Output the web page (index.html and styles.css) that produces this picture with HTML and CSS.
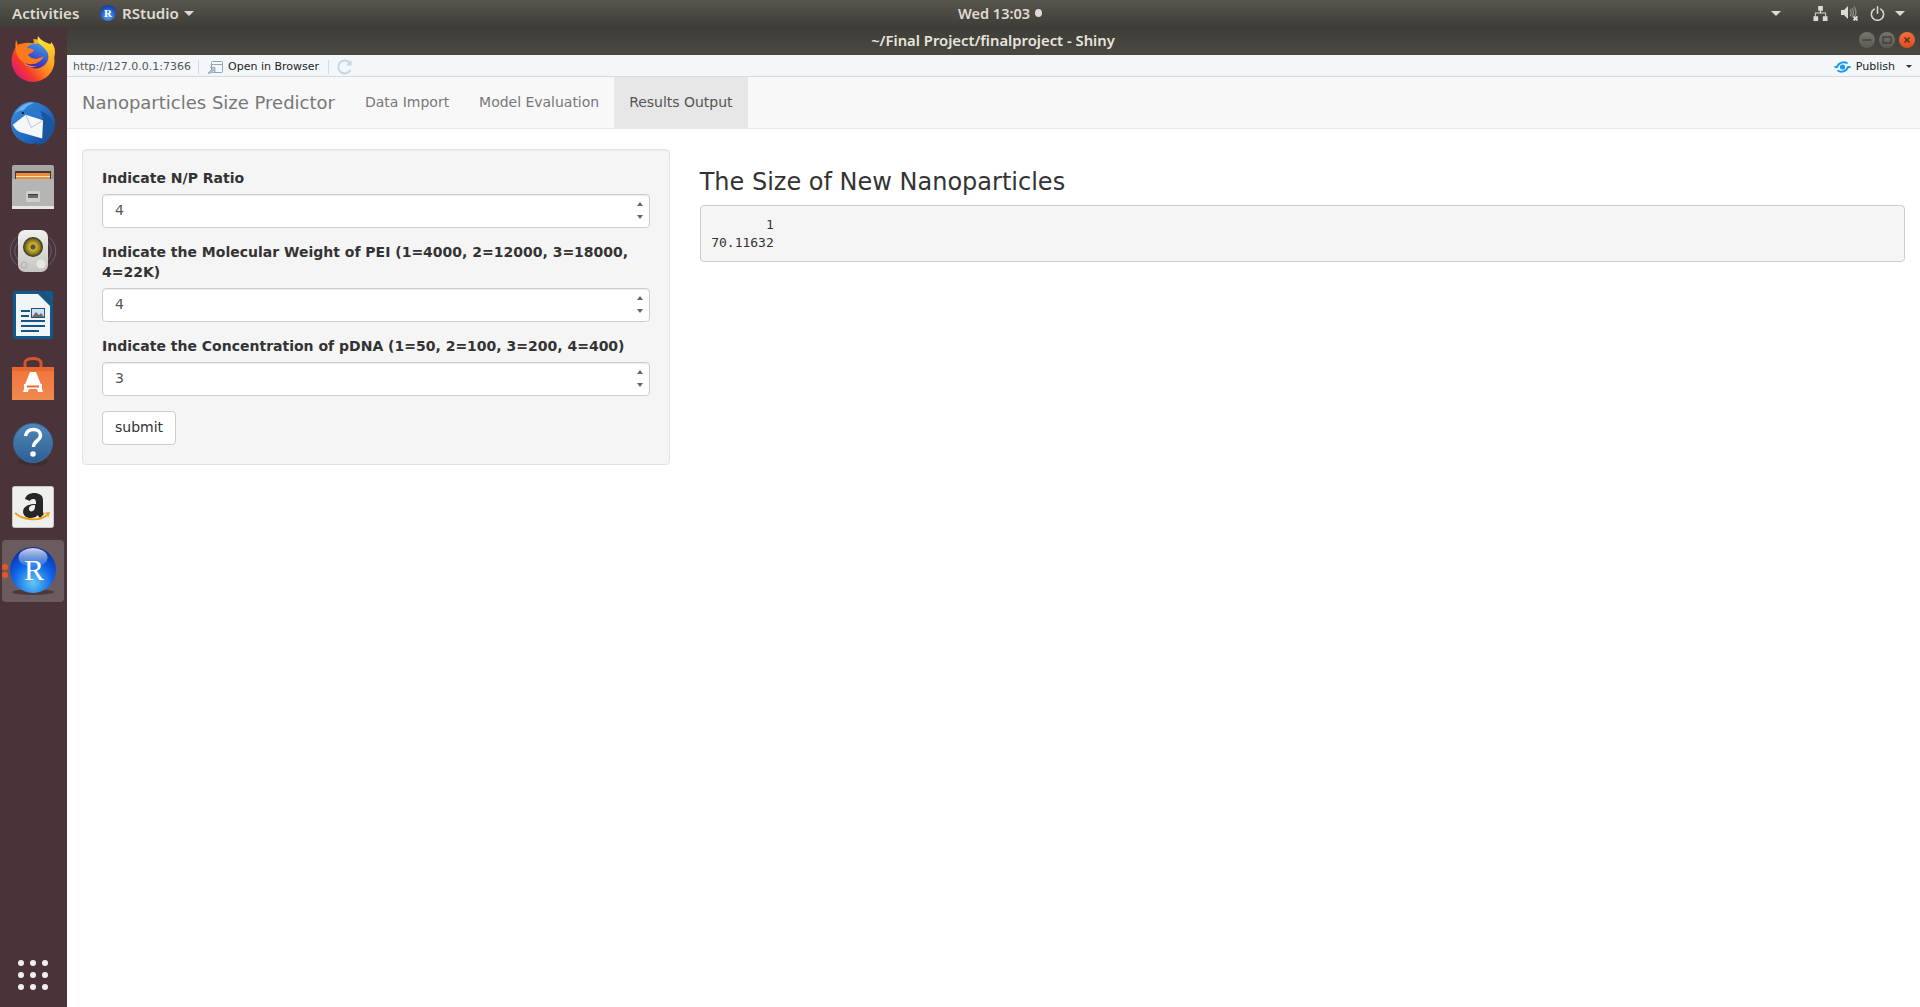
FILE: index.html
```
<!DOCTYPE html>
<html lang="en">
<head>
<meta charset="utf-8">
<title>Nanoparticles Size Predictor</title>
<link rel="stylesheet" href="styles.css">
</head>
<body>
<header class="topbar">
  <div class="top-left">
    <span class="activities">Activities</span>
    <svg class="app-r" viewBox="0 0 16 16"><defs><radialGradient id="tr" cx=".5" cy=".7" r=".6"><stop offset="0" stop-color="#5aa8f0"/><stop offset="1" stop-color="#1443b4"/></radialGradient></defs><circle cx="8" cy="8" r="8" fill="url(#tr)"/><text x="8" y="12" class="app-r-letter">R</text></svg>
    <span class="app-name">RStudio</span>
    <span class="caret-top"></span>
  </div>
  <div class="top-clock"><span>Wed 13:03</span><span class="clock-dot"></span></div>
  <div class="top-right">
    <span class="caret-top caret-a"></span>
    <svg class="tray-net" viewBox="0 0 16 16"><path fill="#dcdad4" d="M5.500 0h5v5H8.600v2H14v4h1.500v5h-5v-5H13V8H3v3h2.500v5h-5v-5H2V7h5.400V5H5.500z"/></svg>
    <svg class="tray-vol" viewBox="0 0 18 16"><path fill="#dcdad4" d="M0 5h3l4-4v13l-4-4H0z"/><path fill="none" stroke="#8f8c85" stroke-width="1.300" d="M9 4.500c1.500 2 1.500 4.500 0 6.500M11 3c2 3 2 6 0 9M13 1.500c2.400 3.500 2.400 7 .8 10"/><path stroke="#dcdad4" stroke-width="1.800" d="M12.500 11.500l4 4M16.500 11.500l-4 4"/></svg>
    <svg class="tray-pow" viewBox="0 0 16 16"><path fill="none" stroke="#dcdad4" stroke-width="1.600" stroke-linecap="round" d="M4.500 3.300a6.500 6.500 0 1 0 7 0M8 .8v7"/></svg>
    <span class="caret-top"></span>
  </div>
</header>
<div class="desktop">
  <nav class="dock">
    <div class="dock-item">
      <svg class="ico-ff" viewBox="0 0 44 46"><defs><linearGradient id="ff" x1=".95" y1=".15" x2=".1" y2=".85"><stop offset="0" stop-color="#ffc928"/><stop offset=".45" stop-color="#ff8a1e"/><stop offset=".75" stop-color="#f5372e"/><stop offset="1" stop-color="#e0187a"/></linearGradient><linearGradient id="ffb" x1=".7" y1="0" x2=".3" y2="1"><stop offset="0" stop-color="#3f9ae8"/><stop offset=".6" stop-color="#3a4cc4"/><stop offset="1" stop-color="#47209c"/></linearGradient><linearGradient id="fft" x1=".4" y1="0" x2=".6" y2="1"><stop offset="0" stop-color="#ffe93a"/><stop offset="1" stop-color="#ffa51e"/></linearGradient></defs><circle cx="22" cy="24.500" r="21.500" fill="url(#ff)"/><path fill="#4a3439" d="M5 2h17l1 5c-5 0-9 1-12 3z"/><circle cx="25" cy="20" r="12.500" fill="url(#ffb)"/><path fill="#ff7a1c" d="M5 4c1 2 2 4 2 6 3-3 8-4 13-3-3 1-5 3-4 5 3 0 6 1 7 2-1 3-5 3-6 5 3 4 8 5 14 2l2-1c-3 6-9 9-15 8C10 27 2 18 5 4z"/><path fill="#ff8f25" d="M12 26c3 3 9 5 14 4-3 2-10 2-14-4z"/><path fill="url(#fft)" d="M27 0c-1 4 0 7 4 10 6 5 9 11 6 19 4-3 7-7 7-13 0-5-2-8-4-10 0 1 0 2-1 2-3-1-9-3-12-8z"/></svg>
    </div>
    <div class="dock-item">
      <svg class="ico-48" viewBox="0 0 48 48"><defs><linearGradient id="tb" x1="0" y1="0" x2="1" y2="1"><stop offset="0" stop-color="#3d8ede"/><stop offset=".6" stop-color="#1f68bd"/><stop offset="1" stop-color="#123f92"/></linearGradient></defs><path fill="url(#tb)" d="M24 1c13 1 24 11 24 23 0 12-8 21-17 24l-4-2-5 1C9 45 0 36 0 25 0 12 11 0 24 1z"/><path fill="#1a559f" d="M33 11c7 3 13 9 14 17-1 8-7 16-13 19 1-3 0-5-1-8l-2 1c2-10 3-21 2-29z"/><path fill="#6fb2ee" d="M4 14C9 6 18 0 25 2c-5 2-9 4-11 8-4 0-7 1-10 4z"/><path fill="#2c77cf" d="M14 10c6-3 13-1 18 2l3 8-17-7z"/><path fill="#f5f6f8" d="M2 26l14-11 19 6-1 20-21-6C8 34 4 31 2 26z"/><path fill="none" stroke="#a8b4c4" stroke-width=".8" d="M16 15l6 14 13-8"/><circle cx="13" cy="13" r="1.300" fill="#1a2434"/></svg>
    </div>
    <div class="dock-item">
      <svg class="ico-42t" viewBox="0 0 42 44"><defs><linearGradient id="fc" x1="0" y1="0" x2="0" y2="1"><stop offset="0" stop-color="#a8a8a4"/><stop offset="1" stop-color="#8c8c88"/></linearGradient></defs><rect y="0" width="42" height="44" rx="2" fill="url(#fc)"/><rect x="3" y="6" width="36" height="9" fill="#3d3a36"/><rect x="4" y="8" width="34" height="8" fill="#ee8a3c"/><rect x="4" y="11" width="34" height="1" fill="#f8e6c8"/><rect x="0" y="14" width="42" height="28" fill="#b5b5b1"/><rect y="41" width="42" height="3" fill="#e6e6e2"/><rect x="14" y="26" width="14" height="11" rx="1.500" fill="#cfcfcb"/><rect x="16" y="29" width="10" height="4" fill="#6a6a66"/><rect x="16" y="29" width="10" height="1" fill="#3a3a36"/></svg>
    </div>
    <div class="dock-item">
      <svg class="ico-48" viewBox="0 0 48 44"><defs><linearGradient id="rb" x1="0" y1="0" x2="0" y2="1"><stop offset="0" stop-color="#f0f0ee"/><stop offset="1" stop-color="#c4c4c0"/></linearGradient><radialGradient id="rc" cx=".5" cy=".5" r=".5"><stop offset="0" stop-color="#3a3a30"/><stop offset=".3" stop-color="#d8b828"/><stop offset=".7" stop-color="#8c7c20"/><stop offset="1" stop-color="#2c2c28"/></radialGradient></defs><g fill="none" stroke="#6d7f98" stroke-opacity=".6"><path d="M8 8C-1 16-1 28 8 36"/><path d="M11 11C4 18 4 26 11 33"/><path d="M40 8c9 8 9 20 0 28"/><path d="M37 11c7 7 7 15 0 22"/></g><rect x="9" y="1" width="30" height="42" rx="7" fill="url(#rb)"/><circle cx="24" cy="18" r="10" fill="url(#rc)"/><circle cx="24" cy="18" r="2.500" fill="#55534a"/><circle cx="32" cy="35" r="4.500" fill="#e6e6e2"/><circle cx="15" cy="36" r="3" fill="none" stroke="#b0b0ac"/></svg>
    </div>
    <div class="dock-item">
      <svg class="ico-doc" viewBox="0 0 40 48"><path fill="#0e5a8c" d="M2 0h25l13 13v32a3 3 0 0 1-3 3H3a3 3 0 0 1-3-3V2a2 2 0 0 1 2-2z"/><path fill="#f2f5f6" d="M3 3h22l12 12v30H3z"/><path fill="#0e5a8c" d="M28 0h10a2 2 0 0 1 2 2v10z"/><rect x="8" y="19" width="9" height="2" fill="#15568a"/><rect x="8" y="24" width="8" height="2" fill="#15568a"/><rect x="8" y="29" width="24" height="2" fill="#15568a"/><rect x="8" y="34" width="24" height="2" fill="#15568a"/><rect x="8" y="39" width="18" height="2" fill="#15568a"/><rect x="18" y="17" width="14" height="10" fill="#15568a"/><path fill="#cfe0ee" d="M19 18h12v8H19z"/><path fill="#7a6a5a" d="M19 26l4-5 3 3 2-2 3 4z"/></svg>
    </div>
    <div class="dock-item">
      <svg class="ico-42t" viewBox="0 0 42 44"><defs><linearGradient id="sw" x1="0" y1="0" x2="0" y2="1"><stop offset="0" stop-color="#f2743a"/><stop offset="1" stop-color="#ef8a50"/></linearGradient></defs><path fill="none" stroke="#d6552a" stroke-width="3" d="M13 14V6c0-6 16-6 16 0v8"/><path fill="url(#sw)" d="M0 10h42v33H0z"/><path fill="#e66a30" d="M0 10h42v4H0z"/><path fill="#fff" d="M18 15h6l6 15h-5l-1-3h-6l-1 3h-5z"/><rect x="12" y="27" width="18" height="5" fill="#fff"/><rect x="15" y="28.500" width="12" height="2" fill="#ee6a30"/><path fill="#fff" d="M12 32h5l-1 3h-5zM25 32h5l1 3h-5z"/></svg>
    </div>
    <div class="dock-item">
      <svg class="ico-help" viewBox="0 -4 40 48"><defs><linearGradient id="hp" x1="0" y1="0" x2="0" y2="1"><stop offset="0" stop-color="#4f88bc"/><stop offset="1" stop-color="#2f5f94"/></linearGradient></defs><ellipse cx="20" cy="38" rx="15" ry="5" fill="#3e2e33"/><circle cx="20" cy="20" r="19.500" fill="url(#hp)" stroke="#3a6c9e"/><path fill="none" stroke="#fff" stroke-width="3.500" d="M12.500 13c1-5 5-6.500 8-6.500 4 0 7 2.500 7 6 0 5-7 5.500-7 11.500"/><circle cx="20" cy="31" r="2.800" fill="#fff"/></svg>
    </div>
    <div class="dock-item">
      <svg class="ico-42" viewBox="0 0 42 42"><rect x=".5" y=".5" width="41" height="41" rx="2" fill="#efefed" stroke="#c8c8c6"/><path fill="#262626" d="M13 13c1-4 5-6 9-6 5 0 9 2 9 7v11c0 2 .5 3 1 3l-4 4c-1-1-2-2-2-3-3 4-14 5-15-3 0-6 6-8 13-8 0-3 0-5-3-5-2 0-3 1-3 2zm10 6c-4 0-6 1-6 4 0 4 6 3 6-2z"/><path fill="none" stroke="#f39c12" stroke-width="1.800" d="M3 27c8 7 24 9 32 2"/><path fill="#f39c12" d="M31 27l7-1-2 6-1-4z"/></svg>
    </div>
    <div class="dock-item">
      <div class="tile">
        <svg class="ico-r" viewBox="0 0 46 48"><defs><radialGradient id="rg" cx=".5" cy=".78" r=".78"><stop offset="0" stop-color="#62c8f6"/><stop offset=".55" stop-color="#0d64e8"/><stop offset="1" stop-color="#0a2a9c"/></radialGradient><linearGradient id="rs" x1="0" y1="0" x2="0" y2="1"><stop offset="0" stop-color="#e6ecf4" stop-opacity=".9"/><stop offset="1" stop-color="#7ca4e8" stop-opacity=".3"/></linearGradient></defs><ellipse cx="23" cy="45" rx="21" ry="3" fill="#4a3a3e"/><circle cx="23" cy="23" r="23" fill="url(#rg)"/><ellipse cx="23" cy="10.500" rx="14.500" ry="9.500" fill="url(#rs)"/><text x="24" y="33" class="ico-r-letter">R</text></svg>
      </div>
      <span class="run-dot dot-a"></span><span class="run-dot dot-b"></span>
    </div>
    <div class="app-grid">
      <i></i><i></i><i></i><i></i><i></i><i></i><i></i><i></i><i></i>
    </div>
  </nav>
  <div class="window">
    <div class="titlebar">
      <span class="title-text">~/Final Project/finalproject - Shiny</span>
      <div class="win-btns">
        <span class="win-btn"><svg viewBox="0 0 16 16"><path d="M3.500 8h9" stroke="#3c3a36" stroke-width="1.200"/></svg></span>
        <span class="win-btn"><svg viewBox="0 0 16 16"><rect x="4" y="5" width="8" height="6" fill="none" stroke="#3c3a36" stroke-width="1.200"/></svg></span>
        <span class="win-btn win-close"><svg viewBox="0 0 16 16"><path d="M5.500 5.500l5 5M10.500 5.500l-5 5" stroke="#4a2a1a" stroke-width="1.200"/></svg></span>
      </div>
    </div>
    <div class="toolbar">
      <span class="tb-url">http://127.0.0.1:7366</span>
      <span class="tb-sep"></span>
      <svg class="tb-open" viewBox="0 0 16 14"><rect x="4.500" y="1.500" width="11" height="11" rx="1" fill="#f4f7f9" stroke="#93a4b4"/><path d="M4.500 4.500h11" stroke="#93a4b4"/><path fill="#b6c4d0" stroke="#7c8fa2" stroke-width=".6" d="M1 13l4-4-1.500-1.500H8V12L6.500 10.500l-4 3.500z"/></svg>
      <span class="tb-open-text">Open in Browser</span>
      <span class="tb-sep"></span>
      <svg class="tb-refresh" viewBox="0 0 16 16"><path fill="none" stroke="#c8d6e2" stroke-width="2" d="M13.500 11A6.500 6.500 0 1 1 13 4"/><path fill="#c8d6e2" d="M14.500 1v5.500H9z"/></svg>
      <svg class="tb-publish" viewBox="0 0 17 14"><path fill="none" stroke="#1b9ce8" stroke-width="2" d="M.5 7H3C4.500 2.500 10 1 13.500 3.500M16.500 7H14C12.500 11.500 7 13 3.500 10.500"/><circle cx="8.500" cy="7" r="2.600" fill="#1b9ce8"/></svg>
      <span class="tb-publish-text">Publish</span>
      <span class="tb-caret"></span>
    </div>
    <div class="navbar">
      <span class="brand">Nanoparticles Size Predictor</span>
      <a class="nav-link">Data Import</a>
      <a class="nav-link">Model Evaluation</a>
      <a class="nav-link nav-active">Results Output</a>
    </div>
    <main class="content">
      <section class="col-side">
        <form class="well">
          <div class="form-group">
            <label class="field-label">Indicate N/P Ratio</label>
            <div class="num-field"><input class="num-input" type="text" value="4"><span class="spin"><i class="spin-up"></i><i class="spin-down"></i></span></div>
          </div>
          <div class="form-group">
            <label class="field-label">Indicate the Molecular Weight of PEI (1=4000, 2=12000, 3=18000, 4=22K)</label>
            <div class="num-field"><input class="num-input" type="text" value="4"><span class="spin"><i class="spin-up"></i><i class="spin-down"></i></span></div>
          </div>
          <div class="form-group">
            <label class="field-label">Indicate the Concentration of pDNA (1=50, 2=100, 3=200, 4=400)</label>
            <div class="num-field"><input class="num-input" type="text" value="3"><span class="spin"><i class="spin-up"></i><i class="spin-down"></i></span></div>
          </div>
          <button class="btn" type="button">submit</button>
        </form>
      </section>
      <section class="col-main">
        <h3 class="result-title">The Size of New Nanoparticles</h3>
        <pre class="result">       1 
70.11632 </pre>
      </section>
    </main>
  </div>
</div>
</body>
</html>
```

FILE: styles.css
```
* { box-sizing: border-box; }
html, body { margin: 0; height: 1007px; overflow: hidden; }
body { font-family: "DejaVu Sans", sans-serif; font-size: 14px; line-height: 20px; color: #333; background: #fff; }

.topbar {
  height: 27px; display: flex; align-items: center;
  padding-bottom: 1px;
  background: linear-gradient(#58554d, #3f3d38);
  color: #dedbd2; font-family: "Noto Sans", sans-serif; font-weight: 600; font-size: 14.500px;
}
.top-left { width: 958px; display: flex; align-items: center; padding-left: 12px; font-size: 15.100px; }
.activities { width: 88px; }
.app-r { width: 16px; height: 16px; }
.app-r-letter { font: bold 11px "Liberation Serif", serif; fill: #fff; text-anchor: middle; }
.app-name { margin-left: 6px; width: 62px; }
.caret-top { width: 0; height: 0; border-left: 5.500px solid transparent; border-right: 5.500px solid transparent; border-top: 5.500px solid #dcdad4; }
.top-clock { display: flex; align-items: center; gap: 5px; white-space: nowrap; width: 84px; }
.clock-dot { width: 8px; height: 8px; border-radius: 50%; background: #dcdad4; }
.top-right { flex: 1; display: flex; align-items: center; padding-left: 729px; }
.caret-a { margin-right: 32px; }
.tray-net { width: 15px; height: 15px; margin-right: 13px; }
.tray-vol { width: 18px; height: 16px; margin-right: 11px; }
.tray-pow { width: 15px; height: 15px; margin-right: 10px; }

.desktop { display: flex; height: 980px; }
.dock { width: 67px; flex: none; display: flex; flex-direction: column; background: #4a3439; position: relative; }
.dock-item { height: 64px; flex: none; display: flex; align-items: center; justify-content: center; position: relative; padding-right: 1px; }
.ico-ff { width: 44px; height: 46px; }
.ico-48 { width: 48px; height: 44px; }
.ico-42 { width: 42px; height: 42px; }
.ico-42t { width: 42px; height: 44px; }
.ico-doc { width: 40px; height: 48px; }
.ico-help { width: 40px; height: 48px; }
.tile { width: 62px; height: 62px; border-radius: 4px; background: #6b5a5e; display: flex; align-items: center; justify-content: center; }
.ico-r { width: 46px; height: 48px; }
.ico-r-letter { font: 30px "Liberation Serif", serif; fill: #fff; text-anchor: middle; }
.run-dot { position: absolute; left: 2px; width: 5.500px; height: 5.500px; border-radius: 50%; background: #e95420; }
.dot-a { top: 25px; }
.dot-b { top: 33px; }
.app-grid { margin-top: auto; margin-bottom: 17px; margin-left: 18px; display: grid; grid-template-columns: repeat(3, 6px); gap: 6px; }
.app-grid i { width: 6px; height: 6px; border-radius: 50%; background: #f2f0f0; }

.window { flex: 1; min-width: 0; display: flex; flex-direction: column; }
.titlebar { height: 28px; flex: none; display: flex; align-items: center; justify-content: center; position: relative; padding: 0 1px 2px 0; background: linear-gradient(#3f3d38, #4a4841); color: #e8e5dc; font-family: "Noto Sans", sans-serif; font-weight: 600; font-size: 14.800px; }
.win-btns { position: absolute; right: 5px; top: 5px; display: flex; gap: 4px; }
.win-btn { width: 16px; height: 16px; border-radius: 50%; background: linear-gradient(#77746e, #5d5a55); display: block; }
.win-btn svg { display: block; width: 16px; height: 16px; }
.win-close { background: linear-gradient(#f07040, #df4d1c); }

.toolbar { height: 22px; flex: none; display: flex; align-items: center; background: #f3f7f9; border-bottom: 1px solid #d3dae0; padding: 2px 0 0 6px; font-size: 11px; color: #222; }
.tb-url { color: #555; width: 125px; }
.tb-sep { width: 1px; height: 14px; background: #d5dbe0; }
.tb-open { width: 16px; height: 14px; margin-left: 8px; }
.tb-open-text { margin-left: 5px; width: 100px; }
.tb-refresh { width: 16px; height: 16px; margin-left: 8px; }
.tb-publish { width: 17px; height: 14px; margin-left: auto; }
.tb-publish-text { margin-left: 5px; }
.tb-caret { width: 0; height: 0; border-left: 3px solid transparent; border-right: 3px solid transparent; border-top: 3px solid #333; margin: 0 8px 0 11px; }

.navbar { height: 52px; flex: none; display: flex; align-items: stretch; background: #f8f8f8; border-bottom: 1px solid #e7e7e7; padding-left: 15px; color: #777; }
.brand { font-size: 18px; line-height: 51px; padding-right: 15px; }
.nav-link { line-height: 51px; padding: 0 15px; color: #777; letter-spacing: -0.020px; }
.nav-active { background: #e7e7e7; color: #555; }

.content { display: flex; margin-top: 20px; }
.col-side { width: 33.333%; padding: 0 15px; flex: none; }
.col-main { width: 66.667%; padding: 0 15px; flex: none; }

.well { background: #f5f5f5; border: 1px solid #e3e3e3; border-radius: 4px; padding: 19px; box-shadow: inset 0 1px 1px rgba(0,0,0,.05); }
.form-group { margin-bottom: 15px; }
.field-label { display: block; font-weight: 700; line-height: 20px; margin-top: -1px; margin-bottom: 6px; }
.num-field { position: relative; }
.num-input { display: block; width: 100%; height: 34px; padding: 5px 12px 7px; font: inherit; color: #555; background: #fff; border: 1px solid #ccc; border-radius: 4px; box-shadow: inset 0 1px 1px rgba(0,0,0,.075); }
.spin { position: absolute; right: 7px; top: 8px; display: flex; flex-direction: column; gap: 9px; }
.spin i { width: 0; height: 0; border-left: 3.500px solid transparent; border-right: 3.500px solid transparent; display: block; }
.spin-up { border-bottom: 4px solid #666; }
.spin-down { border-top: 4px solid #666; }
.btn { display: block; height: 34px; padding: 5px 12px 7px; font: inherit; color: #333; background: #fff; border: 1px solid #ccc; border-radius: 4px; }

.result-title { margin: 20px 0 10px; font-size: 24px; font-weight: 500; line-height: 26.400px; color: #333; }
.result { margin: 0; padding: 9.500px 10px 7.700px 10.500px; font-family: "DejaVu Sans Mono", monospace; font-size: 13px; line-height: 18.571px; color: #333; background: #f5f5f5; border: 1px solid #ccc; border-radius: 4px; }
```
